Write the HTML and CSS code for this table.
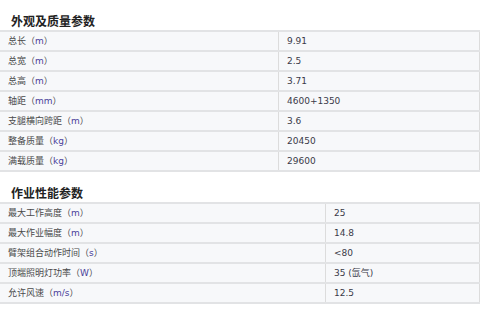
FILE: index.html
```html
<!DOCTYPE html>
<html lang="zh-CN">
<head>
<meta charset="utf-8">
<link rel="stylesheet" href="styles.css">
</head>
<body>
<h2 class="title">外观及质量参数</h2>
<table class="spec spec-a">
  <tr><td class="k">总长（<span class="u">m</span>）</td><td class="v">9.91</td></tr>
  <tr><td class="k">总宽（<span class="u">m</span>）</td><td class="v">2.5</td></tr>
  <tr><td class="k">总高（<span class="u">m</span>）</td><td class="v">3.71</td></tr>
  <tr><td class="k">轴距（<span class="u">mm</span>）</td><td class="v">4600+1350</td></tr>
  <tr><td class="k">支腿横向跨距（<span class="u">m</span>）</td><td class="v">3.6</td></tr>
  <tr><td class="k">整备质量（<span class="u">kg</span>）</td><td class="v">20450</td></tr>
  <tr><td class="k">满载质量（<span class="u">kg</span>）</td><td class="v">29600</td></tr>
</table>
<h2 class="title title-b">作业性能参数</h2>
<table class="spec spec-b">
  <tr><td class="k">最大工作高度（<span class="u">m</span>）</td><td class="v">25</td></tr>
  <tr><td class="k">最大作业幅度（<span class="u">m</span>）</td><td class="v">14.8</td></tr>
  <tr><td class="k">臂架组合动作时间（<span class="u">s</span>）</td><td class="v">&lt;80</td></tr>
  <tr><td class="k">顶端照明灯功率（<span class="u">W</span>）</td><td class="v">35 (氙气)</td></tr>
  <tr><td class="k">允许风速（<span class="u">m/s</span>）</td><td class="v">12.5</td></tr>
</table>
</body>
</html>
```
FILE: styles.css
```css
html, body {
  margin: 0;
  padding: 0;
  background: #fff;
}
body {
  font-family: "DejaVu Sans", "Noto Sans CJK SC", sans-serif;
  width: 480px;
}
.title {
  margin: 0;
  padding: 13px 0 1px 11px;
  font-family: "Noto Sans CJK SC", sans-serif;
  font-size: 12px;
  line-height: 16px;
  font-weight: 700;
  color: #222;
}
.title-b {
  padding-top: 13px;
}
.spec {
  width: 480px;
  border-collapse: collapse;
  table-layout: fixed;
  font-size: 9px;
}
.spec td {
  height: 18px;
  padding: 0 8px;
  background: #f7f8fa;
  border-top: 2px solid #e2e3e5;
  border-right: 1px solid #dcdcdc;
  vertical-align: middle;
  white-space: nowrap;
  line-height: 12px;
}
.spec tr:last-child td {
  border-bottom: 2px solid #e2e3e5;
}
.spec-a td.k { width: 262px; }
.spec-b td.k { width: 309px; }
.k {
  color: #4a4a4a;
  font-family: "Noto Sans CJK SC", sans-serif;
  padding-left: 7px;
}
.u {
  color: #4a3f9a;
  font-family: "DejaVu Sans", sans-serif;
}
.v {
  color: #3a3a48;
  font-family: "DejaVu Sans", "Noto Sans CJK SC", sans-serif;
}
```
